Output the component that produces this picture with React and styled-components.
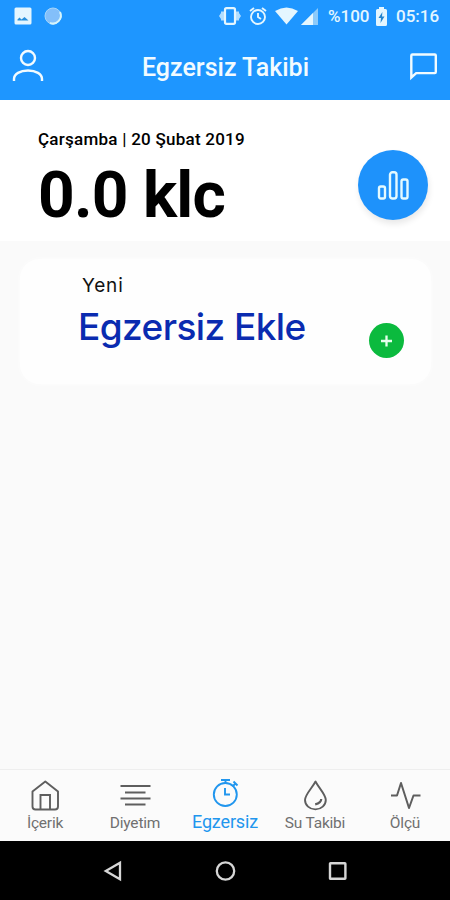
import React from "react";
import styled, { createGlobalStyle } from "styled-components";

const GlobalStyle = createGlobalStyle`
  *, *::before, *::after { box-sizing: border-box; }
  body { margin: 0; background: #fafafa; }
`;

const Screen = styled.div`
  display: flex;
  flex-direction: column;
  width: 450px;
  height: 900px;
  overflow: hidden;
  background: #fafafa;
  font-family: Roboto, sans-serif;
`;

const Icon = styled.svg`
  display: block;
  flex: none;
  overflow: visible;
  fill: none;
  stroke: currentColor;
`;

const StatusBar = styled.div`
  display: flex;
  align-items: center;
  justify-content: space-between;
  height: 32px;
  padding: 0 9px 0 14px;
  background: #1e96ff;
  color: #e4f6ff;
`;

const StatusGroup = styled.div`
  display: flex;
  align-items: center;
  gap: ${(p) => p.$gap}px;
`;

const StatusText = styled.span`
  width: ${(p) => p.$width}px;
  margin-left: ${(p) => p.$before || 0}px;
  font-size: 17px;
  font-weight: 500;
  line-height: 32px;
  white-space: nowrap;
`;

const Header = styled.header`
  display: flex;
  align-items: center;
  justify-content: space-between;
  height: 68px;
  padding: 0 13px 1px 12px;
  background: #1e96ff;
  color: #f2fbff;
`;

const Title = styled.h1`
  margin: 4px 3px 0 0;
  font-size: 25px;
  font-weight: 500;
  line-height: 30px;
`;

const Summary = styled.section`
  display: flex;
  justify-content: space-between;
  height: 141px;
  padding: 28px 22px 0 38px;
  background: #fff;
  color: #000;
`;

const DateLine = styled.p`
  margin: 0;
  font-size: 17px;
  font-weight: 500;
  line-height: 22px;
  letter-spacing: 0.25px;
`;

const Calories = styled.p`
  margin: 9px 0 0;
  font-size: 64px;
  font-weight: 700;
  line-height: 74px;
  letter-spacing: -0.75px;
`;

const ChartButton = styled.button`
  display: grid;
  place-items: center;
  width: 70px;
  height: 70px;
  margin: 22px 0 0;
  padding: 0;
  border: 0;
  border-radius: 50%;
  background: #1e92fb;
  color: #e4faff;
  box-shadow: 1px 4px 6px rgba(0, 0, 0, 0.09);
`;

const Content = styled.main`
  flex: 1;
  padding: 18px 19px 0 20px;
`;

const Card = styled.section`
  display: flex;
  justify-content: space-between;
  height: 125px;
  padding: 15px 27px 0 58px;
  border-radius: 20px;
  background: #fefefe;
  box-shadow: 0 0 5px rgba(255, 255, 255, 0.8);
`;

const CardKicker = styled.p`
  margin: 0 0 0 4px;
  color: #111;
  font-family: Inter, sans-serif;
  font-size: 19px;
  font-weight: 400;
  line-height: 24px;
  letter-spacing: 0.8px;
`;

const CardTitle = styled.h2`
  margin: 6px 0 0;
  color: #0a2bb0;
  font-family: Inter, sans-serif;
  font-size: 37px;
  font-weight: 500;
  line-height: 46px;
  letter-spacing: -0.58px;
  white-space: nowrap;
`;

const AddButton = styled.button`
  display: grid;
  place-items: center;
  width: 35px;
  height: 35px;
  margin: 49px 0 0;
  padding: 0;
  border: 0;
  border-radius: 50%;
  background: #0bba3e;
  color: #e6ffec;
`;

const TabBar = styled.nav`
  display: grid;
  grid-template-columns: repeat(5, 1fr);
  height: 72px;
  border-top: 1px solid #eeeeee;
  background: #fbfbfb;
`;

const Tab = styled.div`
  display: flex;
  flex-direction: column;
  align-items: center;
  padding-top: 9px;
  color: ${(p) => (p.$active ? "#2196ee" : "#5e5e5e")};
`;

const TabLabel = styled.span`
  margin-top: ${(p) => (p.$active ? 1 : 2)}px;
  color: ${(p) => (p.$active ? "#2196ee" : "#707070")};
  font-size: ${(p) => (p.$active ? 18 : 15.5)}px;
  line-height: 20px;
  letter-spacing: ${(p) => (p.$active ? -0.15 : -0.2)}px;
  white-space: nowrap;
`;

const SystemBar = styled.footer`
  display: grid;
  grid-template-columns: repeat(3, 112px);
  justify-content: center;
  justify-items: center;
  align-items: center;
  height: 59px;
  background: #000;
  color: #d6d6d6;
`;

const PictureIcon = () => (
  <Icon width="18" height="18" viewBox="0 0 18 18">
    <rect x="0.5" y="0.5" width="17" height="17" rx="1.5" fill="currentColor" stroke="none" />
    <path d="M3.5 13.5v-1l2-2 2 2 3-2.5 4 3.5Z" fill="#278fdc" stroke="none" />
  </Icon>
);

const SphereIcon = () => (
  <Icon width="18" height="18" viewBox="0 0 18 18">
    <circle cx="9" cy="9" r="8" fill="#83bffa" stroke="#a6d7fb" />
    <path d="M16 5a8 8 0 0 1-10 11" stroke="#d5f4fb" strokeWidth="2" />
  </Icon>
);

const VibrateIcon = () => (
  <Icon width="22" height="18" viewBox="0 0 22 18">
    <path d="M0 9 2 6V4.5h3v9H2V12ZM22 9l-2-3V4.5h-3v9h3V12Z" fill="currentColor" stroke="none" opacity="0.75" />
    <rect x="6" y="1.2" width="10" height="15.6" rx="1.5" fill="#1e96ff" strokeWidth="2.2" />
  </Icon>
);

const AlarmIcon = () => (
  <Icon width="18" height="18" viewBox="0 0 18 18" strokeWidth="1.9">
    <circle cx="9" cy="10" r="7" />
    <path d="m1 4 4-3M17 4l-4-3M9 6v4l3 2" />
  </Icon>
);

const WifiIcon = () => (
  <Icon width="23" height="18" viewBox="0 0 23 18">
    <path d="M0 4Q11.5-3 23 4L11.5 17.5Z" fill="currentColor" stroke="none" />
  </Icon>
);

const SignalIcon = () => (
  <Icon width="17" height="17" viewBox="0 0 17 17">
    <path d="M0 17 17 0v17Z" fill="#8bcafb" stroke="none" />
    <path d="M0 17 12 5v12Z" fill="currentColor" stroke="none" />
  </Icon>
);

const BatteryIcon = () => (
  <Icon width="11" height="19" viewBox="0 0 11 19">
    <path d="M3 0h5v2h1.5Q11 2 11 3.5v14Q11 19 9.5 19h-8Q0 19 0 17.5v-14Q0 2 1.5 2H3Z" fill="currentColor" stroke="none" />
    <path d="M6.4 5 2.5 11H5l-.5 5 4-6.5H6Z" fill="#2484ce" stroke="none" />
  </Icon>
);

const PersonIcon = () => (
  <Icon width="32" height="33" viewBox="0 0 32 33" strokeWidth="2.4">
    <circle cx="16" cy="9" r="7" />
    <path d="M2 32v-2c0-5 6-8.5 14-8.5S30 25 30 30v2" />
  </Icon>
);

const ChatIcon = () => (
  <Icon width="27" height="26" viewBox="0 0 27 26" strokeWidth="2.4">
    <path d="M2.5 1.5h22.3q1 0 1 1v16.6q0 1-1 1H6.2L1.3 24.5V2.7q0-1.2 1.2-1.2Z" />
  </Icon>
);

const BarsIcon = () => (
  <Icon width="32" height="30" viewBox="0 0 32 30" strokeWidth="2.4">
    <rect x="2" y="16.5" width="6" height="12" rx="1.7" />
    <rect x="13" y="2.3" width="6.5" height="26.2" rx="2.4" />
    <rect x="24.5" y="9.5" width="6" height="19" rx="1.8" />
  </Icon>
);

const PlusIcon = () => (
  <Icon width="11" height="11" viewBox="0 0 11 11" strokeWidth="2.3">
    <path d="M5.5 0.5v11M0 6h11" />
  </Icon>
);

const HomeIcon = () => (
  <Icon width="30" height="32" viewBox="0 0 30 32" strokeWidth="1.9">
    <path d="M15.3 2.5 28 12.5V27.5q0 3-3 3H5.5q-3 0-3-3v-15Z" strokeLinejoin="round" />
    <path d="M10.5 30V16h9.5v14" />
  </Icon>
);

const MenuLinesIcon = () => (
  <Icon width="30" height="32" viewBox="0 0 30 32" strokeWidth="2">
    <path d="M.5 7h30M5 13.5h20.5M.5 19.5h30M5 25.5h20.5" />
  </Icon>
);

const StopwatchIcon = () => (
  <Icon width="30" height="32" viewBox="0 0 30 32" strokeWidth="1.9">
    <circle cx="15.3" cy="15.5" r="11.5" />
    <path d="M11 1h9M15.5 1v3M23.5 2.5l4 4M25.5 4.5l-3 3M15 9v6.5h5" />
  </Icon>
);

const DropIcon = () => (
  <Icon width="30" height="32" viewBox="0 0 30 32" strokeWidth="1.9">
    <path d="M15.5 2.5C12.5 8.5 5 15.5 5 21a10.4 9.4 0 0 0 20.8 0C25.8 15.5 18.5 8.5 15.5 2.5Z" strokeLinejoin="round" />
    <path d="M21.2 20q0 4-6 5.3" strokeWidth="2.2" />
  </Icon>
);

const PulseIcon = () => (
  <Icon width="30" height="32" viewBox="0 0 30 32" strokeWidth="2">
    <path d="M1 16.5h6l4-12.5 8 25 4.5-12.5h7" strokeLinejoin="round" />
  </Icon>
);

const BackIcon = () => (
  <Icon width="18" height="20" viewBox="0 0 18 20" strokeWidth="2.3">
    <path d="M1.8 10 16 1.8v16.4Z" />
  </Icon>
);

const HomeCircleIcon = () => (
  <Icon width="20" height="20" viewBox="0 0 20 20" strokeWidth="2.3">
    <circle cx="10.5" cy="10" r="8.7" />
  </Icon>
);

const RecentsIcon = () => (
  <Icon width="18" height="18" viewBox="0 0 18 18" strokeWidth="2.4">
    <rect x="2" y="1.3" width="15.4" height="15.4" rx=".5" />
  </Icon>
);

const tabs = [
  { label: "İçerik", icon: HomeIcon },
  { label: "Diyetim", icon: MenuLinesIcon },
  { label: "Egzersiz", icon: StopwatchIcon, active: true },
  { label: "Su Takibi", icon: DropIcon },
  { label: "Ölçü", icon: PulseIcon },
];

export default function App() {
  return (
    <Screen>
      <GlobalStyle />
      <StatusBar>
        <StatusGroup $gap={12}>
          <PictureIcon />
          <SphereIcon />
        </StatusGroup>
        <StatusGroup $gap={3}>
          <StatusGroup $gap={8}>
            <VibrateIcon />
            <AlarmIcon />
            <WifiIcon />
          </StatusGroup>
          <StatusGroup $gap={5}>
            <SignalIcon />
            <StatusText $width={43} $before={5}>%100</StatusText>
            <BatteryIcon />
            <StatusText $width={45} $before={4}>05:16</StatusText>
          </StatusGroup>
        </StatusGroup>
      </StatusBar>
      <Header>
        <PersonIcon />
        <Title>Egzersiz Takibi</Title>
        <ChatIcon />
      </Header>
      <Summary>
        <div>
          <DateLine>Çarşamba | 20 Şubat 2019</DateLine>
          <Calories>0.0 klc</Calories>
        </div>
        <ChartButton aria-label="İstatistik"><BarsIcon /></ChartButton>
      </Summary>
      <Content>
        <Card>
          <div>
            <CardKicker>Yeni</CardKicker>
            <CardTitle>Egzersiz Ekle</CardTitle>
          </div>
          <AddButton aria-label="Ekle"><PlusIcon /></AddButton>
        </Card>
      </Content>
      <TabBar>
        {tabs.map(({ label, icon: TabIcon, active }) => (
          <Tab key={label} $active={active}>
            <TabIcon />
            <TabLabel $active={active}>{label}</TabLabel>
          </Tab>
        ))}
      </TabBar>
      <SystemBar>
        <BackIcon />
        <HomeCircleIcon />
        <RecentsIcon />
      </SystemBar>
    </Screen>
  );
}
